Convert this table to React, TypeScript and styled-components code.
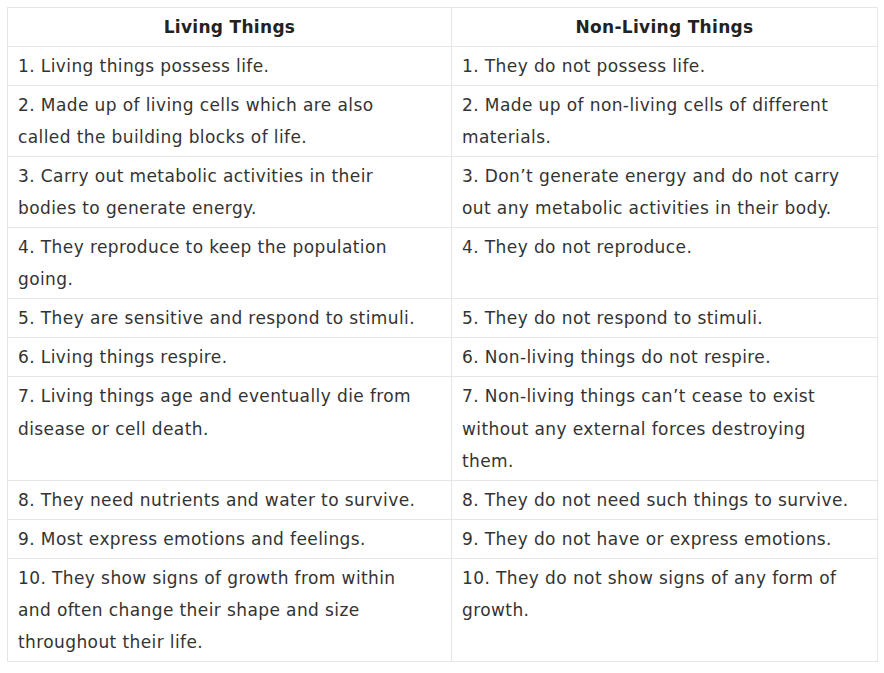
import React from "react";
import styled, { createGlobalStyle } from "styled-components";

const Global = createGlobalStyle`
  html, body { margin: 0; padding: 0; background: #ffffff; }
  body { font-family: "DejaVu Sans", "Noto Sans", sans-serif; }
`;

const Page = styled.div`
  padding: 7px 7px 0 7px;
`;

const Table = styled.table`
  width: 870px;
  border-collapse: collapse;
  table-layout: fixed;
  color: #333333;
`;

const HeadCell = styled.th`
  border: 1px solid #e6e6e6;
  font-weight: 700;
  font-size: 17px;
  letter-spacing: 0.3px;
  color: #222222;
  text-align: center;
  height: 39px;
  padding: 0 10px;
  box-sizing: border-box;
`;

const Cell = styled.td`
  border: 1px solid #e6e6e6;
  font-size: 17px;
  letter-spacing: 0.4px;
  line-height: 32.15px;
  padding: 3px 22px 2.85px 10px;
  vertical-align: top;
  text-align: left;
  font-weight: 400;
`;

const rows: [string, string][] = [
  ["1. Living things possess life.", "1. They do not possess life."],
  [
    "2. Made up of living cells which are also called the building blocks of life.",
    "2. Made up of non-living cells of different materials.",
  ],
  [
    "3. Carry out metabolic activities in their bodies to generate energy.",
    "3. Don\u2019t generate energy and do not carry out any metabolic activities in their body.",
  ],
  ["4. They reproduce to keep the population going.", "4. They do not reproduce."],
  ["5. They are sensitive and respond to stimuli.", "5. They do not respond to stimuli."],
  ["6. Living things respire.", "6. Non-living things do not respire."],
  [
    "7. Living things age and eventually die from disease or cell death.",
    "7. Non-living things can\u2019t cease to exist without any external forces destroying them.",
  ],
  ["8. They need nutrients and water to survive.", "8. They do not need such things to survive."],
  ["9. Most express emotions and feelings.", "9. They do not have or express emotions."],
  [
    "10. They show signs of growth from within and often change their shape and size throughout their life.",
    "10. They do not show signs of any form of growth.",
  ],
];

export default function App() {
  return (
    <Page>
      <Global />
      <Table>
        <colgroup>
          <col style={{ width: 444 }} />
          <col style={{ width: 426 }} />
        </colgroup>
        <thead>
          <tr>
            <HeadCell>Living Things</HeadCell>
            <HeadCell>Non-Living Things</HeadCell>
          </tr>
        </thead>
        <tbody>
          {rows.map(([a, b], i) => (
            <tr key={i}>
              <Cell>{a}</Cell>
              <Cell>{b}</Cell>
            </tr>
          ))}
        </tbody>
      </Table>
    </Page>
  );
}
